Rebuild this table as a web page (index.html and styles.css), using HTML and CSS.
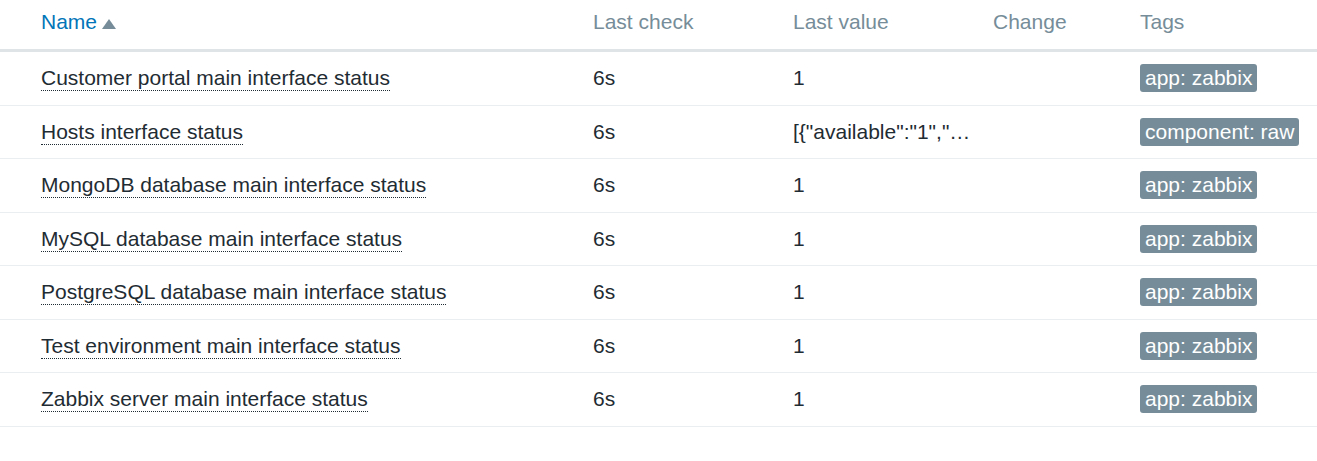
FILE: index.html
```html
<!DOCTYPE html>
<html>
<head>
<meta charset="utf-8">
<link rel="stylesheet" href="styles.css">
</head>
<body>
<div class="tbl">
  <div class="row head">
    <div class="c name"><span class="sort">Name</span><span class="arrow"></span></div>
    <div class="c">Last check</div>
    <div class="c">Last value</div>
    <div class="c">Change</div>
    <div class="c">Tags</div>
  </div>
  <div class="row">
    <div class="c name"><span class="item">Customer portal main interface status</span></div>
    <div class="c">6s</div>
    <div class="c">1</div>
    <div class="c"></div>
    <div class="c"><span class="tag">app: zabbix</span></div>
  </div>
  <div class="row">
    <div class="c name"><span class="item">Hosts interface status</span></div>
    <div class="c">6s</div>
    <div class="c">[{"available":"1","…</div>
    <div class="c"></div>
    <div class="c"><span class="tag">component: raw</span></div>
  </div>
  <div class="row">
    <div class="c name"><span class="item">MongoDB database main interface status</span></div>
    <div class="c">6s</div>
    <div class="c">1</div>
    <div class="c"></div>
    <div class="c"><span class="tag">app: zabbix</span></div>
  </div>
  <div class="row">
    <div class="c name"><span class="item">MySQL database main interface status</span></div>
    <div class="c">6s</div>
    <div class="c">1</div>
    <div class="c"></div>
    <div class="c"><span class="tag">app: zabbix</span></div>
  </div>
  <div class="row">
    <div class="c name"><span class="item">PostgreSQL database main interface status</span></div>
    <div class="c">6s</div>
    <div class="c">1</div>
    <div class="c"></div>
    <div class="c"><span class="tag">app: zabbix</span></div>
  </div>
  <div class="row">
    <div class="c name"><span class="item">Test environment main interface status</span></div>
    <div class="c">6s</div>
    <div class="c">1</div>
    <div class="c"></div>
    <div class="c"><span class="tag">app: zabbix</span></div>
  </div>
  <div class="row">
    <div class="c name"><span class="item">Zabbix server main interface status</span></div>
    <div class="c">6s</div>
    <div class="c">1</div>
    <div class="c"></div>
    <div class="c"><span class="tag">app: zabbix</span></div>
  </div>
</div>
</body>
</html>
```
FILE: styles.css
```css
html, body {
  margin: 0;
  padding: 0;
  background: #ffffff;
}
body {
  font-family: "Liberation Sans", Arial, sans-serif;
  font-size: 21px;
  color: #1f2c33;
}
.tbl {
  width: 100%;
}
.row {
  display: grid;
  grid-template-columns: 593px 200px 200px 147px 1fr;
  align-items: center;
  height: 53.5px;
  box-sizing: border-box;
  border-bottom: 1px solid #ebeef0;
  line-height: 24px;
}
.row.head {
  height: 52px;
  align-items: start;
  padding-top: 10px;
  border-bottom: 3px solid #dfe4e7;
  color: #768d99;
}
.c {
  white-space: nowrap;
}
.c.name {
  padding-left: 41px;
}
.sort {
  color: #0275b8;
}
.arrow {
  display: inline-block;
  width: 0;
  height: 0;
  margin-left: 5px;
  border-left: 7px solid transparent;
  border-right: 7px solid transparent;
  border-bottom: 10px solid #768d99;
  vertical-align: 0;
}
.item {
  border-bottom: 1px dotted #1f2c33;
  padding-bottom: 1px;
}
.tag {
  display: inline-block;
  background: #768d99;
  color: #ffffff;
  border-radius: 3px;
  padding: 2px 5px;
  line-height: 24px;
}
```
